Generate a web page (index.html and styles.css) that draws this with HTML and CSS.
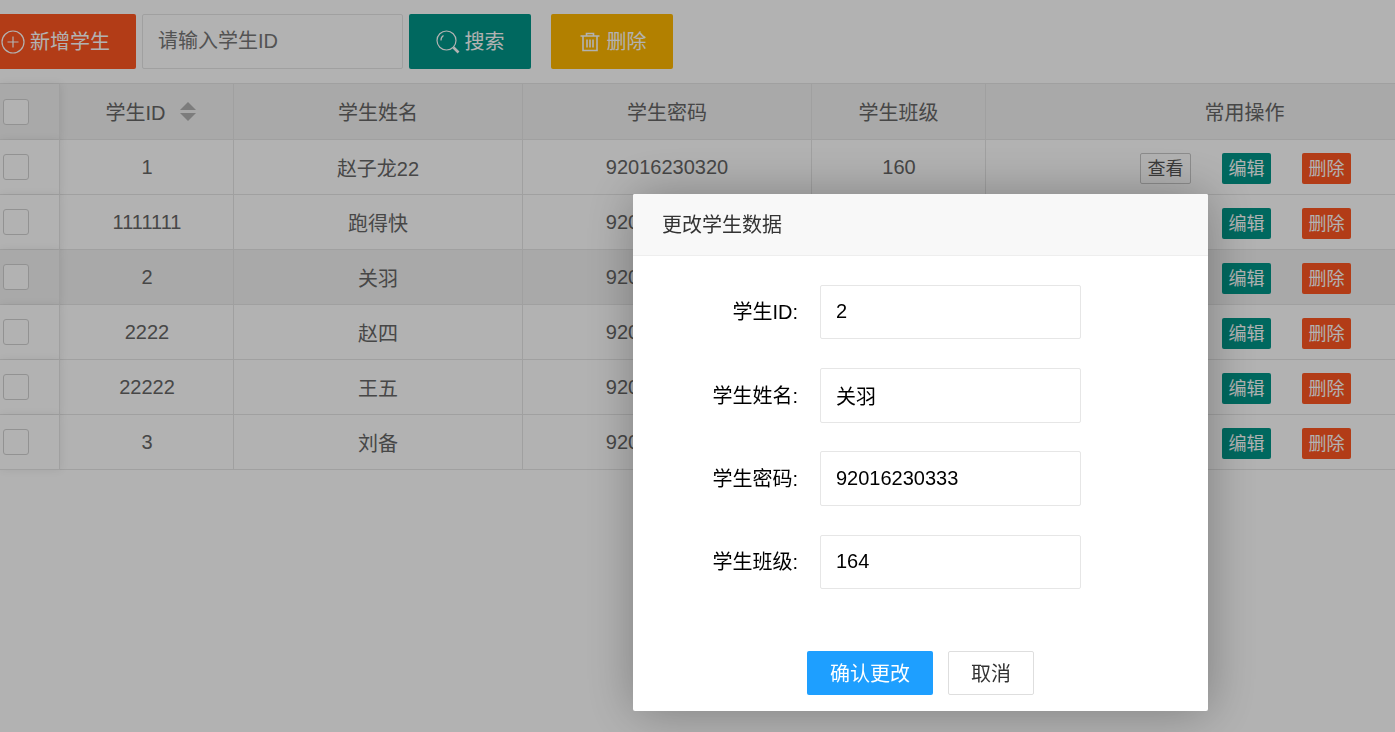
FILE: index.html
```html
<!DOCTYPE html>
<html lang="zh-CN">
<head>
<meta charset="utf-8">
<title>学生管理</title>
<link rel="stylesheet" href="styles.css">
</head>
<body>
<div class="toolbar">
  <button class="btn btn-add"><svg class="ico" width="24" height="24" viewBox="0 0 24 24"><circle cx="12" cy="12" r="11"/><path d="M12 6.5v11M6.5 12h11"/></svg>新增学生</button>
  <input class="search-input" placeholder="请输入学生ID">
  <button class="btn btn-search"><svg class="ico" width="24" height="24" viewBox="0 0 24 24"><circle cx="10.5" cy="10.5" r="9.5"/><path d="M5 10.5a5.500 5.500 0 0 1 2.500-5"/><path class="thick" d="M17.500 17.500l5 5"/></svg>搜索</button>
  <button class="btn btn-del"><svg class="ico ico-trash" width="20" height="20" viewBox="0 0 20 20"><path d="M0.500 4h19M6.500 4V1.500h7V4M3 4v14.500h14V4M7 7.500v8M10 7.500v8M13 7.500v8"/></svg>删除</button>
</div>

<table class="grid">
  <colgroup><col class="c-check"><col class="c-id"><col class="c-name"><col class="c-pass"><col class="c-class"><col class="c-ops"></colgroup>
  <thead>
    <tr>
      <th class="check-cell"><span class="check"></span></th>
      <th><span class="sort-head">学生ID<span class="sort"><i class="up"></i><i class="down"></i></span></span></th>
      <th>学生姓名</th><th>学生密码</th><th>学生班级</th><th>常用操作</th>
    </tr>
  </thead>
  <tbody>
    <tr>
      <td class="check-cell"><span class="check"></span></td><td class="num">1</td><td>赵子龙22</td><td>92016230320</td><td class="num">160</td>
      <td><div class="ops"><button class="mini mini-view">查看</button><button class="mini mini-edit">编辑</button><button class="mini mini-del">删除</button></div></td>
    </tr>
    <tr>
      <td class="check-cell"><span class="check"></span></td><td class="num">1111111</td><td>跑得快</td><td>92016230321</td><td class="num">160</td>
      <td><div class="ops"><button class="mini mini-view">查看</button><button class="mini mini-edit">编辑</button><button class="mini mini-del">删除</button></div></td>
    </tr>
    <tr class="hover">
      <td class="check-cell"><span class="check"></span></td><td class="num">2</td><td>关羽</td><td>92016230333</td><td class="num">164</td>
      <td><div class="ops"><button class="mini mini-view">查看</button><button class="mini mini-edit">编辑</button><button class="mini mini-del">删除</button></div></td>
    </tr>
    <tr>
      <td class="check-cell"><span class="check"></span></td><td class="num">2222</td><td>赵四</td><td>92016230322</td><td class="num">160</td>
      <td><div class="ops"><button class="mini mini-view">查看</button><button class="mini mini-edit">编辑</button><button class="mini mini-del">删除</button></div></td>
    </tr>
    <tr>
      <td class="check-cell"><span class="check"></span></td><td class="num">22222</td><td>王五</td><td>92016230323</td><td class="num">160</td>
      <td><div class="ops"><button class="mini mini-view">查看</button><button class="mini mini-edit">编辑</button><button class="mini mini-del">删除</button></div></td>
    </tr>
    <tr>
      <td class="check-cell"><span class="check"></span></td><td class="num">3</td><td>刘备</td><td>92016230324</td><td class="num">160</td>
      <td><div class="ops"><button class="mini mini-view">查看</button><button class="mini mini-edit">编辑</button><button class="mini mini-del">删除</button></div></td>
    </tr>
  </tbody>
</table>

<div class="shade"></div>

<div class="modal">
  <div class="modal-title">更改学生数据</div>
  <form class="modal-form">
    <label class="field"><span class="field-label">学生ID:</span><input class="field-input" value="2"></label>
    <label class="field"><span class="field-label">学生姓名:</span><input class="field-input" value="关羽"></label>
    <label class="field"><span class="field-label">学生密码:</span><input class="field-input" value="92016230333"></label>
    <label class="field"><span class="field-label">学生班级:</span><input class="field-input" value="164"></label>
  </form>
  <div class="modal-actions">
    <button class="act act-ok">确认更改</button>
    <button class="act act-cancel">取消</button>
  </div>
</div>
</body>
</html>
```

FILE: styles.css
```css
* { box-sizing: border-box; }
html, body { margin: 0; height: 100%; overflow: hidden; }
body {
  background: #fff;
  color: #666;
  font-family: "Liberation Sans", "Noto Sans CJK SC", sans-serif;
  font-size: 20px;
}
button, input { font: inherit; }

/* toolbar */
.toolbar {
  display: flex;
  align-items: stretch;
  height: 83px;
  padding: 14px 0;
  margin-left: -25px;
  width: 1420px;
}
.btn {
  display: flex;
  align-items: center;
  justify-content: center;
  gap: 5px;
  height: 55px;
  width: 122px;
  padding: 0 0 2px;
  border: 0;
  border-radius: 2px;
  color: #fff;
}
.ico { fill: none; stroke: currentColor; stroke-width: 1.200; flex: none; position: relative; top: 1px; }
.ico .thick { stroke-width: 2.600; }
.btn-add { width: 161px; background: #ff5722; }
.btn-search { background: #009688; margin-left: 6px; }
.btn-del { background: #ffb800; margin-left: 20px; gap: 7px; padding-left: 2px; }
.ico-trash { stroke-width: 1.600; }
.search-input {
  width: 261px;
  height: 55px;
  margin-left: 6px;
  padding: 0 15px;
  border: 1px solid #e6e6e6;
  border-radius: 2px;
  background: #fff;
  color: #333;
}
.search-input::placeholder { color: #777; opacity: 1; }

/* table */
.grid {
  table-layout: fixed;
  border-collapse: separate;
  border-spacing: 0;
  width: 1504px;
  border-top: 1px solid #e6e6e6;
}
.c-check { width: 60px; }
.c-id { width: 174px; }
.c-name { width: 289px; }
.c-pass { width: 289px; }
.c-class { width: 174px; }
.c-ops { width: 518px; }
.grid th, .grid td {
  height: 55px;
  padding: 0;
  text-align: center;
  font-weight: 400;
  color: #666;
  background: #fff;
  border-right: 1px solid #e6e6e6;
  border-bottom: 1px solid #e6e6e6;
}
.grid th { height: 56px; background: #f2f2f2; }
.grid tr.hover td { background: #f2f2f2; }
.grid td.num { padding-left: 1px; }
.grid .check-cell {
  position: relative;
  text-align: left;
  padding-left: 3px;
  box-shadow: 1px 0 8px rgba(0, 0, 0, .08);
}
.check {
  display: block;
  width: 26px;
  height: 26px;
  border: 1px solid #d2d2d2;
  border-radius: 3px;
  background: #fff;
}
.sort-head { display: inline-flex; align-items: center; gap: 14px; margin-left: 8px; }
.sort { display: flex; flex-direction: column; gap: 3px; }
.sort i { display: block; width: 0; height: 0; border-left: 8px solid transparent; border-right: 8px solid transparent; }
.sort .up { border-bottom: 8px solid #b2b2b2; }
.sort .down { border-top: 8px solid #b2b2b2; }

.ops { display: flex; justify-content: center; align-items: center; gap: 31px; padding: 3px 0 0 2px; }
.mini {
  height: 31px;
  padding: 0 6.500px 3px;
  border: 0;
  border-radius: 2px;
  font-size: 18px;
  color: #fff;
  white-space: nowrap;
}
.mini-view { background: transparent; border: 1px solid #c9c9c9; color: #555; }
.mini-edit { background: #009688; }
.mini-del { background: #ff5722; }

/* modal */
.shade { position: fixed; inset: 0; z-index: 2; background: rgba(0, 0, 0, .3); }
.modal {
  position: fixed;
  z-index: 3;
  left: 633px;
  top: 194px;
  width: 575px;
  height: 517px;
  background: #fff;
  border-radius: 2px;
  box-shadow: 1px 1px 50px rgba(0, 0, 0, .3);
  overflow: hidden;
}
.modal-title {
  height: 62px;
  padding: 0 29px;
  line-height: 62px;
  color: #333;
  background: #f8f8f8;
  border-bottom: 1px solid #eee;
}
.modal-form {
  display: flex;
  flex-direction: column;
  gap: 28.800px;
  padding-top: 29px;
}
.field { display: flex; align-items: center; height: 54.400px; }
.field-label { width: 165px; padding-bottom: 2px; text-align: right; color: #000; white-space: nowrap; }
.field:first-child .field-label { padding-bottom: 4px; }
.field:first-child .field-input { padding-bottom: 2px; }
.field-input {
  width: 261px;
  height: 100%;
  margin-left: 22px;
  padding: 0 15px;
  border: 1px solid #e6e6e6;
  border-radius: 2px;
  background: #fff;
  color: #000;
}
.modal-actions {
  display: flex;
  justify-content: center;
  gap: 15px;
  margin-top: 62px;
}
.act { height: 44px; border-radius: 2px; padding: 0; }
.act-ok { width: 126px; background: #1e9fff; border: 0; color: #fff; }
.act-cancel { width: 86px; background: #fff; border: 1px solid #dedede; color: #333; }
```
